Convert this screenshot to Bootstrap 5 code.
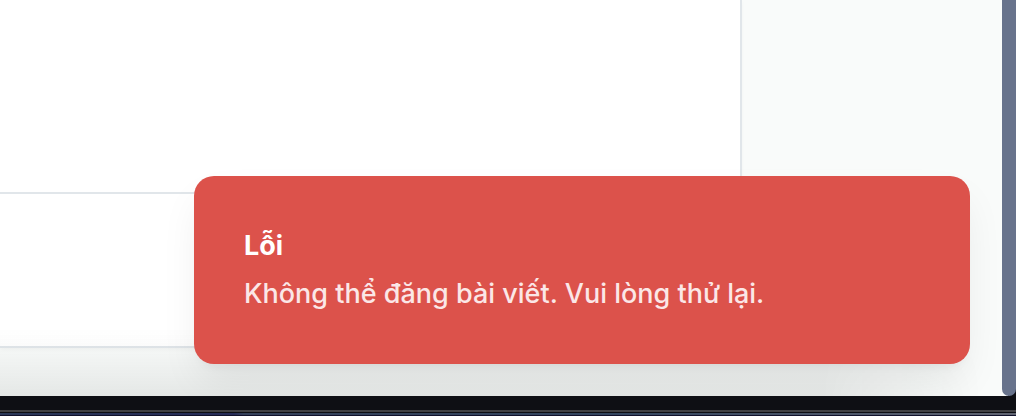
<!DOCTYPE html>
<html lang="vi">
<head>
<meta charset="utf-8">
<meta name="viewport" content="width=device-width, initial-scale=1">
<title>Lỗi</title>
<link rel="stylesheet" href="https://cdn.jsdelivr.net/npm/bootstrap@5.3.0/dist/css/bootstrap.min.css">
<style>
  body { font-family: Inter, "Noto Sans", sans-serif; background: #0e0f14; }
  .workspace { background: linear-gradient(to right, #f9fbfa 50%, #f9fbfa calc(100% - 8px), #0e0f14 calc(100% - 8px)); }
  .editor { margin: 0 260px 48px 0; background: #fff; border-right: 2px solid #e1e6ea; border-bottom: 2px solid #e1e6ea; box-shadow: 0 2px 4px rgba(0,0,0,.03); }
  .editor-foot { height: 154px; border-top: 2px solid #e1e6ea; }
  /* shade cast by the dock below the window */
  .shade { height: 68px; background: linear-gradient(to bottom, rgba(20,30,25,0), rgba(20,30,25,.02) 32%, rgba(20,30,25,.085));
    -webkit-mask-image: linear-gradient(to right, #000 82%, transparent 98%); mask-image: linear-gradient(to right, #000 82%, transparent 98%); }
  .notice { left: 194px; right: 32px; bottom: 32px; padding: 50px; border-radius: 20px; background: #dc524b; color: #fff;
    box-shadow: 0 20px 40px -6px rgba(0,0,0,.08), 0 8px 12px -8px rgba(0,0,0,.08); }
  .notice-title { font-size: 27px; line-height: 40px; font-weight: 700; margin-bottom: 8px; }
  .notice-text { font-size: 27px; line-height: 40px; font-weight: 500; color: #fbe7e7; }
  .thumb { width: 14px; background: #68738c; border-radius: 0 0 7px 7px; }
  .dock { height: 20px; padding-top: 14px; background: #0e0f14; }
  .dock-edge { height: 6px; border-top: 2px solid #414144; }
  .dock-glow { margin-top: 1px; height: 3px; background: linear-gradient(to bottom, transparent 67%, #11122c 67%), linear-gradient(to right, #2b3858, #262c58 23%, #35415a 24%, #33455f 60%, #606472); }
</style>
</head>
<body class="overflow-hidden">
<div class="d-flex flex-column vh-100">
  <div class="workspace d-flex flex-fill overflow-hidden">
    <main class="position-relative d-flex flex-column flex-fill overflow-hidden">
      <section class="editor d-flex flex-column flex-fill">
        <div class="flex-fill"></div>
        <div class="editor-foot"></div>
      </section>
      <div class="shade position-absolute bottom-0 start-0 end-0"></div>
      <div class="notice position-absolute" role="alert">
        <div class="notice-title">Lỗi</div>
        <div class="notice-text">Không thể đăng bài viết. Vui lòng thử lại.</div>
      </div>
    </main>
    <div class="thumb"></div>
  </div>
  <footer class="dock"><div class="dock-edge overflow-hidden"><div class="dock-glow"></div></div></footer>
</div>
<script src="https://cdn.jsdelivr.net/npm/bootstrap@5.3.0/dist/js/bootstrap.bundle.min.js"></script>
</body>
</html>
